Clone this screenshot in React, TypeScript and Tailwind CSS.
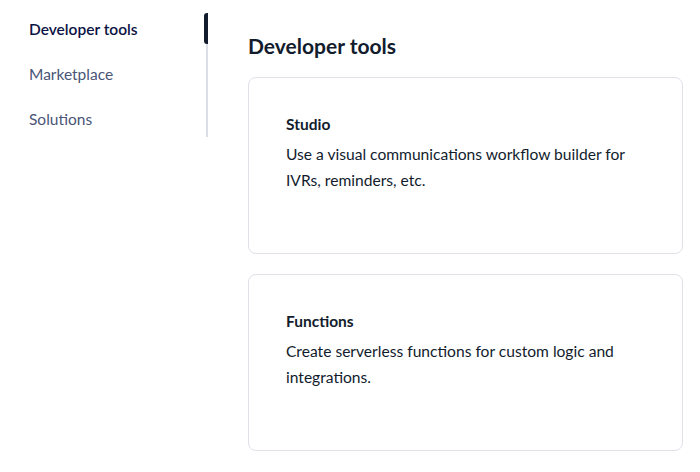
const navItems = [
  { label: "Developer tools", active: true },
  { label: "Marketplace", active: false },
  { label: "Solutions", active: false },
]

const tools = [
  {
    title: "Studio",
    description: "Use a visual communications workflow builder for IVRs, reminders, etc.",
  },
  {
    title: "Functions",
    description: "Create serverless functions for custom logic and integrations.",
  },
]

function SideNav() {
  return (
    <nav className="w-[208px] shrink-0 pt-[13px]">
      <ul className="flex flex-col gap-[13px] border-r-2 border-[#dcdee5] pb-[2px]">
        {navItems.map((item) => (
          <li
            key={item.label}
            className={
              item.active
                ? "relative flex h-[32px] items-center pl-[29px] pt-[2px] text-[15.5px] font-semibold text-[#0b1344]"
                : "relative flex h-[32px] items-center pl-[29px] pt-[2px] text-[15.5px] text-[#4a5577]"
            }
          >
            {item.label}
            {item.active && (
              <span className="absolute right-[-2px] top-0 h-[31px] w-[4px] rounded-l-[3px] bg-[#121c2d]" />
            )}
          </li>
        ))}
      </ul>
    </nav>
  )
}

function ToolCard({ title, description }: { title: string; description: string }) {
  return (
    <div className="h-[177px] rounded-[8px] border border-[#dfe1e8] bg-white pl-[37px] pr-[36px] pt-[34px]">
      <h3 className="text-[15.5px] font-bold leading-[24px] text-[#121c2d]">{title}</h3>
      <p className="mt-[5px] text-[15.6px] leading-[26px] text-[#121c2d]">{description}</p>
    </div>
  )
}

export default function App() {
  return (
    <div className="flex h-[472px] w-[700px] bg-white font-['Lato',sans-serif] antialiased">
      <SideNav />
      <main className="ml-[40px] w-[435px] pt-[32px]">
        <h2 className="text-[21px] font-bold leading-[28px] text-[#121c2d]">Developer tools</h2>
        <div className="mt-[17px] flex flex-col gap-[20px]">
          {tools.map((t) => (
            <ToolCard key={t.title} title={t.title} description={t.description} />
          ))}
        </div>
      </main>
    </div>
  )
}
